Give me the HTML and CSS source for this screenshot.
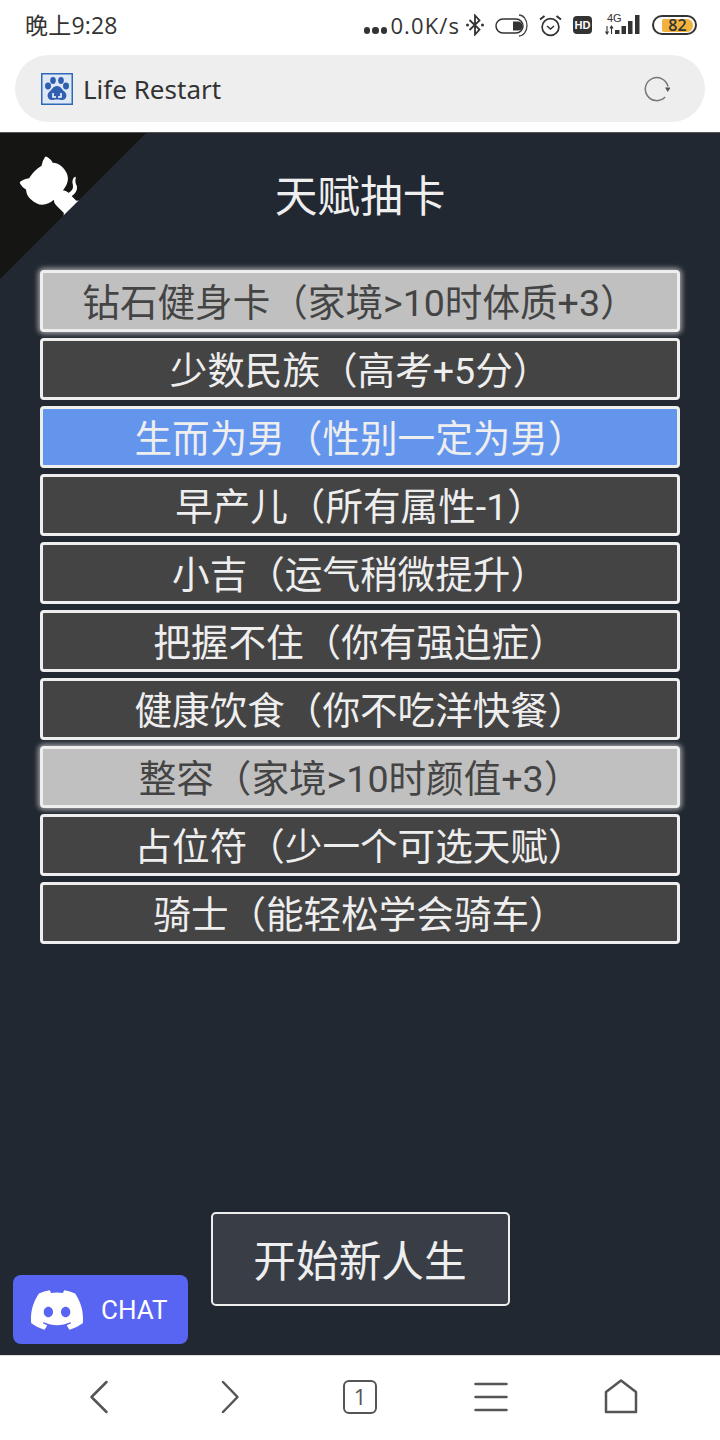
FILE: index.html
```html
<!DOCTYPE html>
<html lang="zh">
<head>
<meta charset="utf-8">
<title>Life Restart</title>
<link rel="stylesheet" href="styles.css">
</head>
<body>
<div class="phone">
  <header class="status">
    <span class="time">晚上9:28</span>
    <div class="status-right">
      <span class="dots"><i></i><i></i><i></i></span>
      <span class="speed">0.0K/s</span>
      <svg class="si bt" viewBox="0 0 18 22"><path d="M3.500 6L13.500 15.500 9 20.500V1.500L13.500 6.500 3.500 16" fill="none" stroke="#333" stroke-width="1.800"/><circle cx="1.500" cy="11" r="1.500" fill="#333"/><circle cx="16.500" cy="11" r="1.500" fill="#333"/></svg>
      <svg class="si toggle" viewBox="0 0 33 23"><rect x="1" y="5" width="27" height="14" rx="7" fill="none" stroke="#333" stroke-width="1.500"/><path d="M18 7.500h5a4.500 4.500 0 0 1 0 9h-5z" fill="#333"/><path d="M24 1A8 10.500 0 0 1 24 22" fill="none" stroke="#444" stroke-width="1.300"/></svg>
      <svg class="si alarm" viewBox="0 0 23 23"><circle cx="11.500" cy="13" r="8.400" fill="none" stroke="#333" stroke-width="1.700"/><path d="M8 12l3.500 3 3.500-3" fill="none" stroke="#333" stroke-width="1.600"/><path d="M1 5.500L5.500 2M22 5.500L17.500 2" stroke="#333" stroke-width="2"/></svg>
      <span class="hd">HD</span>
      <div class="signal">
        <span class="four">4G</span>
        <svg viewBox="0 0 39 20"><path d="M4 11v8M2.500 16.500l1.500 2.500 1.500-2.500M8.500 19v-8M7 13.500l1.500-2.500 1.500 2.500" stroke="#333" stroke-width="1.100" fill="none"/><rect x="12" y="15" width="4.500" height="4" fill="#333"/><rect x="18.500" y="11" width="4.500" height="8" fill="#333"/><rect x="25" y="6" width="4.500" height="13" fill="#333"/><rect x="32" y="0" width="4.500" height="19" fill="#333"/></svg>
      </div>
      <div class="battery"><div class="battery-fill">82</div></div>
    </div>
  </header>

  <div class="address-wrap">
    <div class="address">
      <svg class="favicon" viewBox="0 0 32 32">
        <rect x="0.750" y="0.750" width="30.500" height="30.500" fill="#dfe9f6" stroke="#2f69b8" stroke-width="1.500"/>
        <g fill="#2f5fae"><ellipse cx="7" cy="13" rx="3" ry="3.400"/><ellipse cx="12" cy="7.500" rx="2.800" ry="3.400"/><ellipse cx="20" cy="7.500" rx="2.800" ry="3.400"/><ellipse cx="25" cy="13" rx="3" ry="3.400"/><path d="M16 13c4 0 5 4 8 6 3 3 1 9-4 8-3-.6-5-.6-8 0-5 1-7-5-4-8 3-2 4-6 8-6z"/></g>
        <path d="M12 20v4h3M20 20v4h-3" stroke="#fff" stroke-width="1.500" fill="none"/>
      </svg>
      <span class="page-title">Life Restart</span>
      <svg class="reload" viewBox="0 0 26 26"><path d="M21.100 21.100A11.500 11.500 0 1 1 24 10.500" fill="none" stroke="#777" stroke-width="1.500"/><path d="M21 11.500h5.500l-2.750 4.500z" fill="#555"/></svg>
    </div>
  </div>

  <main class="page">
    <a class="corner" aria-label="GitHub">
      <svg viewBox="0 0 250 250" class="corner-svg">
        <path d="M0,0 L115,115 L130,115 L142,142 L250,250 L250,0 Z" fill="#151513"/>
        <path d="M128.3,109.0 C113.8,99.7 119.0,89.6 119.0,89.6 C122.0,82.7 120.5,78.6 120.5,78.6 C119.2,72.0 123.4,76.3 123.4,76.3 C127.3,80.9 125.5,87.3 125.5,87.3 C122.9,97.6 130.6,101.9 134.4,103.2" fill="#fff"/>
        <path d="M115.0,115.0 C114.9,115.1 118.7,116.5 119.8,115.4 L133.7,101.6 C136.9,99.2 139.9,98.4 142.2,98.6 C133.8,88.0 127.5,74.4 143.8,58.0 C148.5,53.4 154.0,51.2 159.7,51.0 C160.3,49.4 163.2,43.6 171.4,40.1 C171.4,40.1 176.1,42.5 178.8,56.2 C183.1,58.6 187.2,61.8 190.9,65.4 C194.5,69.0 197.7,73.2 200.1,77.6 C213.8,80.2 216.3,84.9 216.3,84.9 C212.7,93.1 206.9,96.0 205.4,96.6 C205.1,102.4 203.0,107.8 198.3,112.5 C181.9,128.9 168.3,122.5 157.7,114.1 C157.9,116.9 156.7,120.9 152.7,124.9 L141.0,136.5 C139.8,137.7 141.6,141.9 141.8,141.8 Z" fill="#fff"/>
      </svg>
    </a>
    <h1 class="title">天赋抽卡</h1>
    <ul class="list">
      <li class="item gray">钻石健身卡（家境&gt;10时体质+3）</li>
      <li class="item">少数民族（高考+5分）</li>
      <li class="item selected">生而为男（性别一定为男）</li>
      <li class="item">早产儿（所有属性-1）</li>
      <li class="item">小吉（运气稍微提升）</li>
      <li class="item">把握不住（你有强迫症）</li>
      <li class="item">健康饮食（你不吃洋快餐）</li>
      <li class="item gray">整容（家境&gt;10时颜值+3）</li>
      <li class="item">占位符（少一个可选天赋）</li>
      <li class="item">骑士（能轻松学会骑车）</li>
    </ul>
    <button class="start">开始新人生</button>
    <a class="chat">
      <svg class="discord" viewBox="0 0 24 24"><path fill="#fff" d="M20.317 4.37a19.791 19.791 0 0 0-4.885-1.515.074.074 0 0 0-.079.037c-.21.375-.444.864-.608 1.25a18.27 18.27 0 0 0-5.487 0 12.64 12.64 0 0 0-.617-1.25.077.077 0 0 0-.079-.037A19.736 19.736 0 0 0 3.677 4.37a.07.07 0 0 0-.032.027C.533 9.046-.32 13.58.099 18.057a.082.082 0 0 0 .031.057 19.9 19.9 0 0 0 5.993 3.03.078.078 0 0 0 .084-.028 14.09 14.09 0 0 0 1.226-1.994.076.076 0 0 0-.041-.106 13.107 13.107 0 0 1-1.872-.892.077.077 0 0 1-.008-.128 10.2 10.2 0 0 0 .372-.292.074.074 0 0 1 .077-.01c3.928 1.793 8.18 1.793 12.062 0a.074.074 0 0 1 .078.01c.12.098.246.198.373.292a.077.077 0 0 1-.006.127 12.299 12.299 0 0 1-1.873.892.077.077 0 0 0-.041.107c.36.698.772 1.362 1.225 1.993a.076.076 0 0 0 .084.028 19.839 19.839 0 0 0 6.002-3.03.077.077 0 0 0 .032-.054c.5-5.177-.838-9.674-3.549-13.66a.061.061 0 0 0-.031-.03zM8.02 15.33c-1.183 0-2.157-1.085-2.157-2.419 0-1.333.956-2.419 2.157-2.419 1.21 0 2.176 1.096 2.157 2.42 0 1.333-.956 2.418-2.157 2.418zm7.975 0c-1.183 0-2.157-1.085-2.157-2.419 0-1.333.955-2.419 2.157-2.419 1.21 0 2.176 1.096 2.157 2.42 0 1.333-.946 2.418-2.157 2.418z"/></svg>
      <span>CHAT</span>
    </a>
  </main>

  <nav class="nav">
    <svg class="nav-icon" viewBox="0 0 40 40"><path d="M27.500 5L12.500 20l15 15"/></svg>
    <svg class="nav-icon" viewBox="0 0 40 40"><path d="M13 5L27.500 20 13 35"/></svg>
    <div class="tabs">1</div>
    <svg class="nav-icon" viewBox="0 0 40 40"><path d="M4.500 7h31M4.500 20h31M4.500 33h31"/></svg>
    <svg class="nav-icon" viewBox="0 0 40 40"><path d="M20 3.500L35 15v20H5V15z"/></svg>
  </nav>
</div>
</body>
</html>
```
FILE: styles.css
```css
* { box-sizing: border-box; }
html, body { margin: 0; padding: 0; }
body { font-family: "Noto Sans", "Noto Sans CJK SC", sans-serif; background: #fff; }
.phone { width: 720px; height: 1440px; display: flex; flex-direction: column; overflow: hidden; }

.status { height: 55px; flex: none; display: flex; align-items: center; justify-content: space-between; padding: 0 23px 5px 25px; color: #333; }
.time { font-size: 23px; line-height: 26px; letter-spacing: 0.2px; font-family: "Open Sans", "Noto Sans CJK SC", sans-serif; }
.status-right { display: flex; align-items: center; }
.dots { display: flex; gap: 2px; margin-top: 11px; margin-right: 3px; }
.dots i { width: 6.500px; height: 6.500px; border-radius: 50%; background: #333; }
.speed { font-size: 22px; line-height: 26px; font-family: "Open Sans", sans-serif; letter-spacing: 1.100px; margin-right: 6px; }
.si { display: block; flex: none; }
.bt { width: 18px; height: 22px; margin-right: 11px; }
.toggle { width: 33px; height: 23px; margin-right: 11px; }
.alarm { width: 23px; height: 23px; margin-right: 11px; }
.hd { width: 19px; height: 18px; border-radius: 4px; background: #333; color: #fff; font-size: 11px; font-weight: 700; line-height: 18px; text-align: center; font-family: "Liberation Sans", sans-serif; margin-right: 11px; }
.signal { position: relative; width: 39px; height: 24px; margin-right: 10px; }
.signal svg { display: block; width: 39px; height: 20px; margin-top: 2px; }
.four { position: absolute; left: 4px; top: 0; font-size: 11px; line-height: 10px; color: #333; font-family: "Liberation Sans", sans-serif; }
.battery { width: 45px; height: 20px; border: 2px solid #333; border-radius: 10px; padding: 1.500px 0 0 8px; }
.battery-fill { width: 31px; height: 13px; background: #f2b33d; border-radius: 2px 6px 6px 2px; font-size: 16px; line-height: 13px; color: #333; text-align: center; font-family: "Open Sans", sans-serif; font-weight: 600; }

.address-wrap { height: 77px; flex: none; padding: 0 15px 10px; }
.address { height: 67px; border-radius: 34px; background: #eeeeee; display: flex; align-items: center; padding: 0 35px 0 26px; }
.favicon { width: 32px; height: 32px; flex: none; }
.page-title { font-size: 26px; color: #333; margin-left: 10px; flex: 1; font-family: "Noto Sans", sans-serif; }
.reload { width: 26px; height: 26px; flex: none; }

.page { position: relative; flex: 1; background: #222831; display: flex; flex-direction: column; align-items: center; padding-bottom: 49px; border-top: 1px solid #555; }
.corner { position: absolute; left: 0; top: 0; width: 146px; height: 146px; }
.corner-svg { display: block; width: 146px; height: 146px; transform: scaleX(-1); }
.title { margin: 28px 0 0; height: 64px; font-size: 42.700px; line-height: 64px; font-weight: 400; color: #eeeeee; font-family: "Noto Sans CJK SC", sans-serif; }
.list { list-style: none; margin: 45px 0 0; padding: 0; width: 640px; display: flex; flex-direction: column; gap: 6px; }
.item { height: 62px; border: 3px solid #eeeeee; border-radius: 4px; color: #eeeeee; background: #444444; font-size: 37.600px; line-height: 60px; text-align: center; white-space: nowrap; font-family: Roboto, "Noto Sans CJK SC", sans-serif; font-weight: 400; }
.item.gray { background: #c0c0c0; color: #444; box-shadow: 0 0 5px 2px rgba(238,238,238,.6); }
.item.selected { background: #6495ed; }
.start { margin-top: auto; width: 299px; height: 94px; border: 2px solid #eeeeee; border-radius: 5px; background: #393e46; color: #eeeeee; font-size: 42.700px; font-family: "Noto Sans CJK SC", sans-serif; padding: 0 0 3px; }
.chat { position: absolute; left: 13px; top: 1142px; width: 175px; height: 69px; border-radius: 8px; background: #5865f2; display: flex; align-items: center; padding-left: 18px; color: #fff; font-size: 26px; font-family: Roboto, sans-serif; }
.discord { width: 52px; height: 52px; margin-right: 18px; flex: none; }

.nav { height: 85px; flex: none; background: #fff; display: grid; grid-template-columns: repeat(5, 40px); justify-content: space-between; align-items: center; padding: 0 79px 2px; border-top: 1px solid #ddd; }
.nav-icon { width: 40px; height: 40px; display: block; }
.nav-icon path { fill: none; stroke: #555; stroke-width: 2.500; stroke-linecap: round; stroke-linejoin: round; }
.tabs { width: 34px; height: 34px; justify-self: center; border: 2.500px solid #555; border-radius: 6px; color: #555; font-size: 22px; line-height: 29px; text-align: center; font-family: "Open Sans", sans-serif; }
```
